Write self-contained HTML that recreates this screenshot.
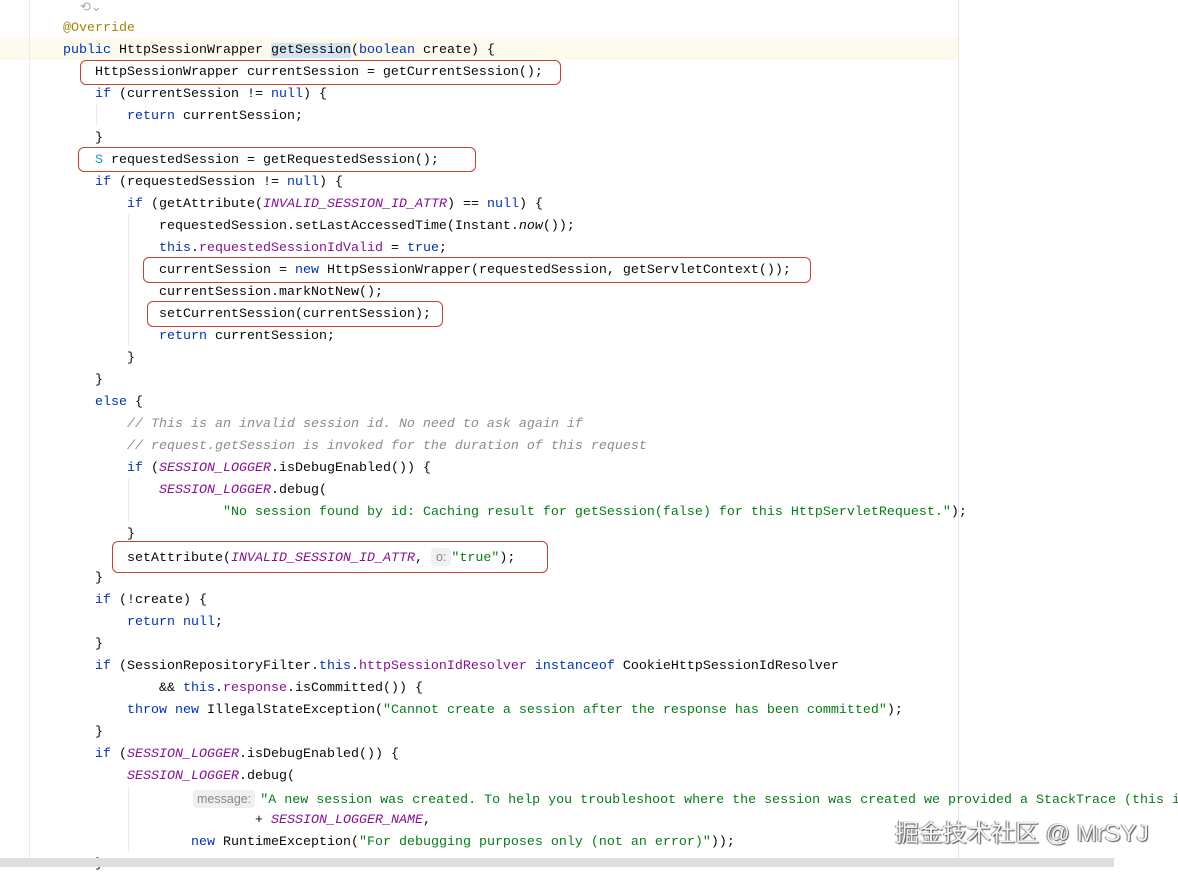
<!DOCTYPE html><html><head><meta charset="utf-8"><style>
body{margin:0;width:1178px;height:867px;background:#fff;position:relative;overflow:hidden;font-family:"Liberation Mono",monospace;font-size:13.33px;color:#080808}
.l{position:absolute;white-space:pre;height:22px;line-height:22px;margin-top:2px}
.k{color:#0033b3}.p{color:#871094;font-style:italic}.f{color:#871094}.s{color:#067d17}.c{color:#8c8c8c;font-style:italic}.a{color:#9e880d}.i{font-style:italic}
.h{background:#d5e3f4;}
.hint{font-family:"Liberation Sans",sans-serif;font-size:12.5px;color:#888;background:#f0f0f0;border-radius:4px;padding:2px 5px}
.box{position:absolute;border:1px solid #c8402f;border-radius:6px}
.g{position:absolute;width:1px;background:#ebebeb}
</style></head><body>
<div style="position:absolute;left:0;top:38px;width:958px;height:22px;background:#fcfaed"></div>
<div style="position:absolute;left:29px;top:0;width:1px;height:867px;background:#ebebeb"></div>
<div style="position:absolute;left:958px;top:0;width:1px;height:867px;background:#e6e6e6"></div>
<div class="g" style="left:96px;top:104px;height:22px"></div>
<div class="g" style="left:128px;top:214px;height:132px"></div>
<div class="g" style="left:128px;top:478px;height:44px"></div>
<div class="g" style="left:128px;top:786px;height:66px"></div>
<div style="position:absolute;left:80px;top:0;color:#aaa;font-size:13px;font-family:'DejaVu Sans',sans-serif">⟲⌄</div>
<div class="l a" style="left:63px;top:16px">@Override</div>
<div class="l" style="left:63px;top:38px"><span class="k">public</span> HttpSessionWrapper <span class="h">getSession</span>(<span class="k">boolean</span> create) {</div>
<div class="l" style="left:95px;top:60px">HttpSessionWrapper currentSession = getCurrentSession();</div>
<div class="l" style="left:95px;top:82px"><span class="k">if</span> (currentSession != <span class="k">null</span>) {</div>
<div class="l" style="left:127px;top:104px"><span class="k">return</span> currentSession;</div>
<div class="l" style="left:95px;top:126px">}</div>
<div class="l" style="left:95px;top:148px"><span style="color:#20999d">S</span> requestedSession = getRequestedSession();</div>
<div class="l" style="left:95px;top:170px"><span class="k">if</span> (requestedSession != <span class="k">null</span>) {</div>
<div class="l" style="left:127px;top:192px"><span class="k">if</span> (getAttribute(<span class="p">INVALID_SESSION_ID_ATTR</span>) == <span class="k">null</span>) {</div>
<div class="l" style="left:159px;top:214px">requestedSession.setLastAccessedTime(Instant.<span class="i">now</span>());</div>
<div class="l" style="left:159px;top:236px"><span class="k">this</span>.<span class="f">requestedSessionIdValid</span> = <span class="k">true</span>;</div>
<div class="l" style="left:159px;top:258px">currentSession = <span class="k">new</span> HttpSessionWrapper(requestedSession, getServletContext());</div>
<div class="l" style="left:159px;top:280px">currentSession.markNotNew();</div>
<div class="l" style="left:159px;top:302px">setCurrentSession(currentSession);</div>
<div class="l" style="left:159px;top:324px"><span class="k">return</span> currentSession;</div>
<div class="l" style="left:127px;top:346px">}</div>
<div class="l" style="left:95px;top:368px">}</div>
<div class="l" style="left:95px;top:390px"><span class="k">else</span> {</div>
<div class="l c" style="left:127px;top:412px">// This is an invalid session id. No need to ask again if</div>
<div class="l c" style="left:127px;top:434px">// request.getSession is invoked for the duration of this request</div>
<div class="l" style="left:127px;top:456px"><span class="k">if</span> (<span class="p">SESSION_LOGGER</span>.isDebugEnabled()) {</div>
<div class="l" style="left:159px;top:478px"><span class="p">SESSION_LOGGER</span>.debug(</div>
<div class="l s" style="left:223px;top:500px">"No session found by id: Caching result for getSession(false) for this HttpServletRequest."<span style="color:#080808">);</span></div>
<div class="l" style="left:127px;top:522px">}</div>
<div class="l" style="left:127px;top:544px">setAttribute(<span class="p">INVALID_SESSION_ID_ATTR</span>, <span class="hint">o:</span><span class="s">"true"</span>);</div>
<div class="l" style="left:95px;top:566px">}</div>
<div class="l" style="left:95px;top:588px"><span class="k">if</span> (!create) {</div>
<div class="l" style="left:127px;top:610px"><span class="k">return</span> <span class="k">null</span>;</div>
<div class="l" style="left:95px;top:632px">}</div>
<div class="l" style="left:95px;top:654px"><span class="k">if</span> (SessionRepositoryFilter.<span class="k">this</span>.<span class="f">httpSessionIdResolver</span> <span class="k">instanceof</span> CookieHttpSessionIdResolver</div>
<div class="l" style="left:159px;top:676px">&amp;&amp; <span class="k">this</span>.<span class="f">response</span>.isCommitted()) {</div>
<div class="l" style="left:127px;top:698px"><span class="k">throw new</span> IllegalStateException(<span class="s">"Cannot create a session after the response has been committed"</span>);</div>
<div class="l" style="left:95px;top:720px">}</div>
<div class="l" style="left:95px;top:742px"><span class="k">if</span> (<span class="p">SESSION_LOGGER</span>.isDebugEnabled()) {</div>
<div class="l" style="left:127px;top:764px"><span class="p">SESSION_LOGGER</span>.debug(</div>
<div class="l" style="left:193px;top:786px"><span class="hint" style="padding:2px 4px;margin-right:5px">message:</span><span class="s">"A new session was created. To help you troubleshoot where the session was created we provided a StackTrace (this is</span></div>
<div class="l" style="left:255px;top:808px">+ <span class="p">SESSION_LOGGER_NAME</span>,</div>
<div class="l" style="left:191px;top:830px"><span class="k">new</span> RuntimeException(<span class="s">"For debugging purposes only (not an error)"</span>));</div>
<div class="l" style="left:95px;top:852px">}</div>
<div class="box" style="left:80px;top:60px;width:479px;height:23px"></div>
<div class="box" style="left:78px;top:147px;width:396px;height:23px"></div>
<div class="box" style="left:143px;top:257px;width:666px;height:24px"></div>
<div class="box" style="left:147px;top:301px;width:294px;height:24px"></div>
<div class="box" style="left:112px;top:541px;width:434px;height:30px"></div>
<div style="position:absolute;left:0;top:858px;width:1114px;height:9px;background:#dedede"></div>
<div style="position:absolute;left:895px;top:813px;font-family:'Liberation Sans','Noto Sans CJK SC',sans-serif;font-size:24px;color:#f4f4f4;text-shadow:1px 1px 1px #555,-1px 0 1px #777">掘金技术社区 @ MrSYJ</div>
</body></html>
